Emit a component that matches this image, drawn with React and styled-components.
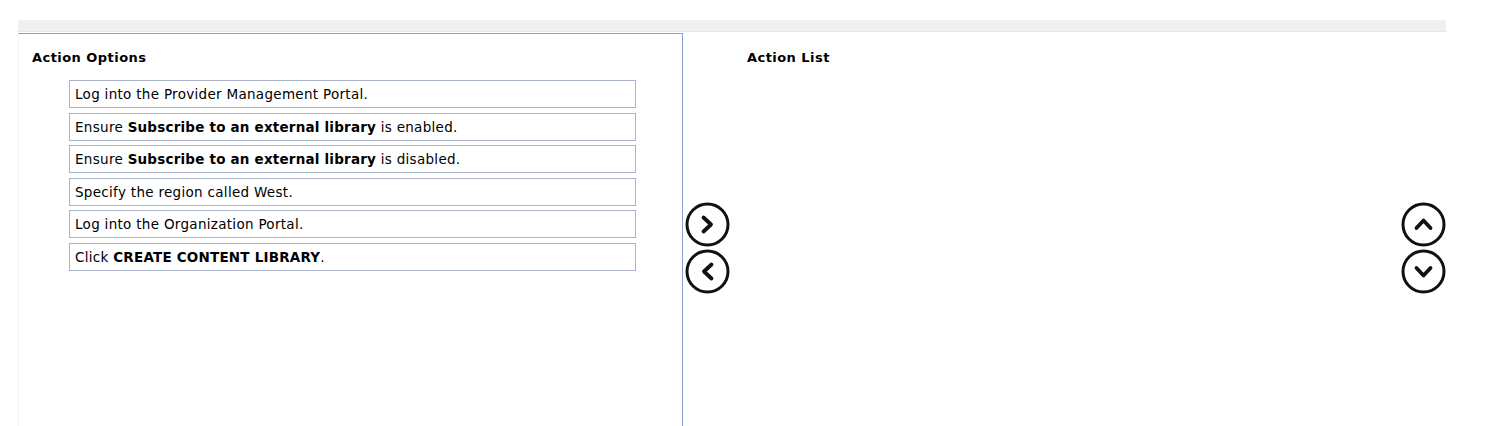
import React from 'react'
import styled, { createGlobalStyle } from 'styled-components'

const GlobalStyle = createGlobalStyle`
  html, body {
    margin: 0;
    padding: 0;
    background: #ffffff;
    font-family: "DejaVu Sans", Verdana, sans-serif;
    color: #000;
  }
`

const Page = styled.div`
  width: 1428px;
  height: 426px;
  padding: 20px 0 0 18px;
  box-sizing: content-box;
  overflow: hidden;
`

const TopBar = styled.div`
  height: 11px;
  background: #f0f0f0;
  border-bottom: 1px solid #e6e6e6;
`

const Body = styled.div`
  display: flex;
  margin-top: 1px;
  height: 400px;
`

const OptionsPanel = styled.section`
  width: 665px;
  border-top: 1px solid #8e9fd2;
  border-right: 1px solid #8e9fd2;
  border-left: 1px solid #f2f2f2;
  padding: 16px 0 0 13px;
  box-sizing: border-box;
`

const Heading = styled.h3`
  margin: 0 0 ${(p) => p.$gap || 10}px;
  font-size: 13px;
  font-weight: bold;
  line-height: 16px;
  letter-spacing: 0.45px;
`

const OptionList = styled.div`
  display: flex;
  flex-direction: column;
  gap: 4.5px;
  margin-left: 37px;
  width: 567px;
`

const Option = styled.div`
  height: 28px;
  line-height: 27px;
  box-sizing: border-box;
  border: 1px solid #a9b3cb;
  padding: 0 5px;
  font-size: 13.5px;
  letter-spacing: 0.3px;
  white-space: nowrap;
  b {
    font-weight: bold;
    letter-spacing: 0.2px;
  }
`

const ArrowColumn = styled.div`
  display: flex;
  flex-direction: column;
  justify-content: flex-start;
  gap: 2px;
  padding-top: 169px;
  margin-left: ${(p) => p.$left || 0}px;
`

const RoundButton = styled.button`
  width: 45px;
  height: 45px;
  padding: 0;
  border: none;
  background: transparent;
  cursor: pointer;
  display: block;
  svg {
    display: block;
  }
`

const ListPanel = styled.section`
  flex: 1;
  padding: 17px 0 0 17px;
`

const chevrons = {
  right: 'M18.5 15.5 L26 22.5 L18.5 29.5',
  left: 'M26.5 15.5 L19 22.5 L26.5 29.5',
  up: 'M15.5 26 L22.5 18.5 L29.5 26',
  down: 'M15.5 19 L22.5 26.5 L29.5 19',
}

function CircleArrow({ dir }) {
  return (
    <RoundButton aria-label={dir}>
      <svg width="45" height="45" viewBox="0 0 45 45">
        <circle cx="22.5" cy="22.5" r="20.5" fill="none" stroke="#111" strokeWidth="3" />
        <path
          d={chevrons[dir]}
          fill="none"
          stroke="#111"
          strokeWidth="3.8"
          strokeLinecap="round"
          strokeLinejoin="round"
        />
      </svg>
    </RoundButton>
  )
}

const options = [
  <>Log into the Provider Management Portal.</>,
  <>Ensure <b>Subscribe to an external library</b> is enabled.</>,
  <>Ensure <b>Subscribe to an external library</b> is disabled.</>,
  <>Specify the region called West.</>,
  <>Log into the Organization Portal.</>,
  <>Click <b>CREATE CONTENT LIBRARY</b>.</>,
]

export default function App() {
  return (
    <Page>
      <GlobalStyle />
      <TopBar />
      <Body>
        <OptionsPanel>
          <Heading $gap={14}>Action Options</Heading>
          <OptionList>
            {options.map((o, i) => (
              <Option key={i}>{o}</Option>
            ))}
          </OptionList>
        </OptionsPanel>
        <ArrowColumn $left={2}>
          <CircleArrow dir="right" />
          <CircleArrow dir="left" />
        </ArrowColumn>
        <ListPanel>
          <Heading>Action List</Heading>
        </ListPanel>
        <ArrowColumn>
          <CircleArrow dir="up" />
          <CircleArrow dir="down" />
        </ArrowColumn>
      </Body>
    </Page>
  )
}
